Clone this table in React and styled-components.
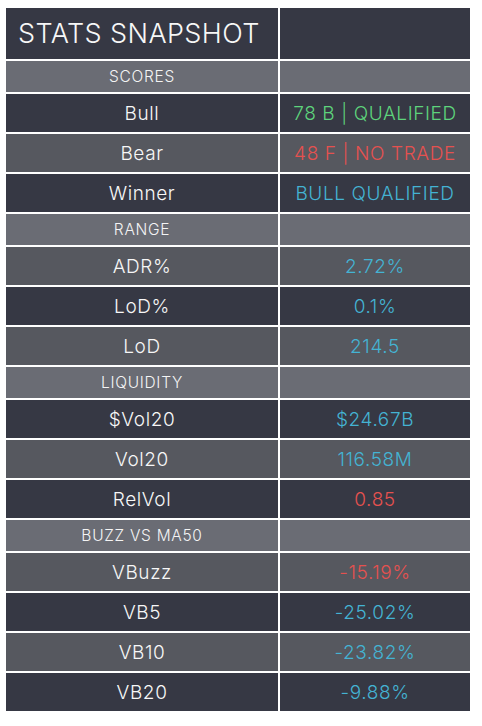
import React from 'react'
import styled, { createGlobalStyle } from 'styled-components'

const GlobalStyle = createGlobalStyle`
  body {
    margin: 0;
    background: #ffffff;
    font-family: Inter, "Noto Sans", "Liberation Sans", sans-serif;
  }
`;

// row data for the snapshot table
const sections = [
  {
    title: 'SCORES',
    rows: [
      { label: 'Bull', value: '78 B | QUALIFIED', tone: 'green' },
      { label: 'Bear', value: '48 F | NO TRADE', tone: 'red' },
      { label: 'Winner', value: 'BULL QUALIFIED', tone: 'blue' },
    ],
  },
  {
    title: 'RANGE',
    rows: [
      { label: 'ADR%', value: '2.72%', tone: 'blue' },
      { label: 'LoD%', value: '0.1%', tone: 'blue' },
      { label: 'LoD', value: '214.5', tone: 'blue' },
    ],
  },
  {
    title: 'LIQUIDITY',
    rows: [
      { label: '$Vol20', value: '$24.67B', tone: 'blue' },
      { label: 'Vol20', value: '116.58M', tone: 'blue' },
      { label: 'RelVol', value: '0.85', tone: 'red' },
    ],
  },
  {
    title: 'BUZZ VS MA50',
    rows: [
      { label: 'VBuzz', value: '-15.19%', tone: 'red' },
      { label: 'VB5', value: '-25.02%', tone: 'blue' },
      { label: 'VB10', value: '-23.82%', tone: 'blue' },
      { label: 'VB20', value: '-9.88%', tone: 'blue' },
    ],
  },
];

const tones = {
  green: '#5ed47c',
  red: '#e5514f',
  blue: '#44b3d3',
};

function StatsSnapshot() {
  let rowIndex = 0;
  return (
    <Page>
      <Grid>
        <TitleCell>STATS SNAPSHOT</TitleCell>
        <TitleCell />
        {sections.map((section) => (
          <React.Fragment key={section.title}>
            <SectionCell>{section.title}</SectionCell>
            <SectionCell />
            {section.rows.map((row) => {
              const striped = rowIndex++ % 2 === 1;
              return (
                <React.Fragment key={row.label}>
                  <DataCell $striped={striped}>{row.label}</DataCell>
                  <DataCell $striped={striped} $tone={row.tone}>{row.value}</DataCell>
                </React.Fragment>
              );
            })}
          </React.Fragment>
        ))}
      </Grid>
    </Page>
  );
}

export default function App() {
  return (
    <>
      <GlobalStyle />
      <StatsSnapshot />
    </>
  );
}

const Page = styled.div`
  padding: 8px 6px;
`;

const Grid = styled.div`
  display: grid;
  grid-template-columns: 272px 190px;
  gap: 2px;
  width: 464px;
`;

const TitleCell = styled.div`
  height: 51px;
  display: flex;
  align-items: center;
  padding-left: 12px;
  background: #363844;
  color: #f7f7f7;
  font-size: 27px;
  font-weight: 300;
  letter-spacing: 0.4px;
`;

const SectionCell = styled.div`
  height: 31px;
  display: flex;
  align-items: center;
  justify-content: center;
  background: #6a6c74;
  color: #f4f4f4;
  font-size: 15.5px;
  font-weight: 350;
  letter-spacing: 0.7px;
`;

const DataCell = styled.div`
  height: 38px;
  display: flex;
  align-items: center;
  justify-content: center;
  background: ${(p) => (p.$striped ? '#56585f' : '#363844')};
  color: ${(p) => (p.$tone ? tones[p.$tone] : '#f7f7f7')};
  font-size: 19px;
  font-weight: 350;
  letter-spacing: 0.6px;
`;
